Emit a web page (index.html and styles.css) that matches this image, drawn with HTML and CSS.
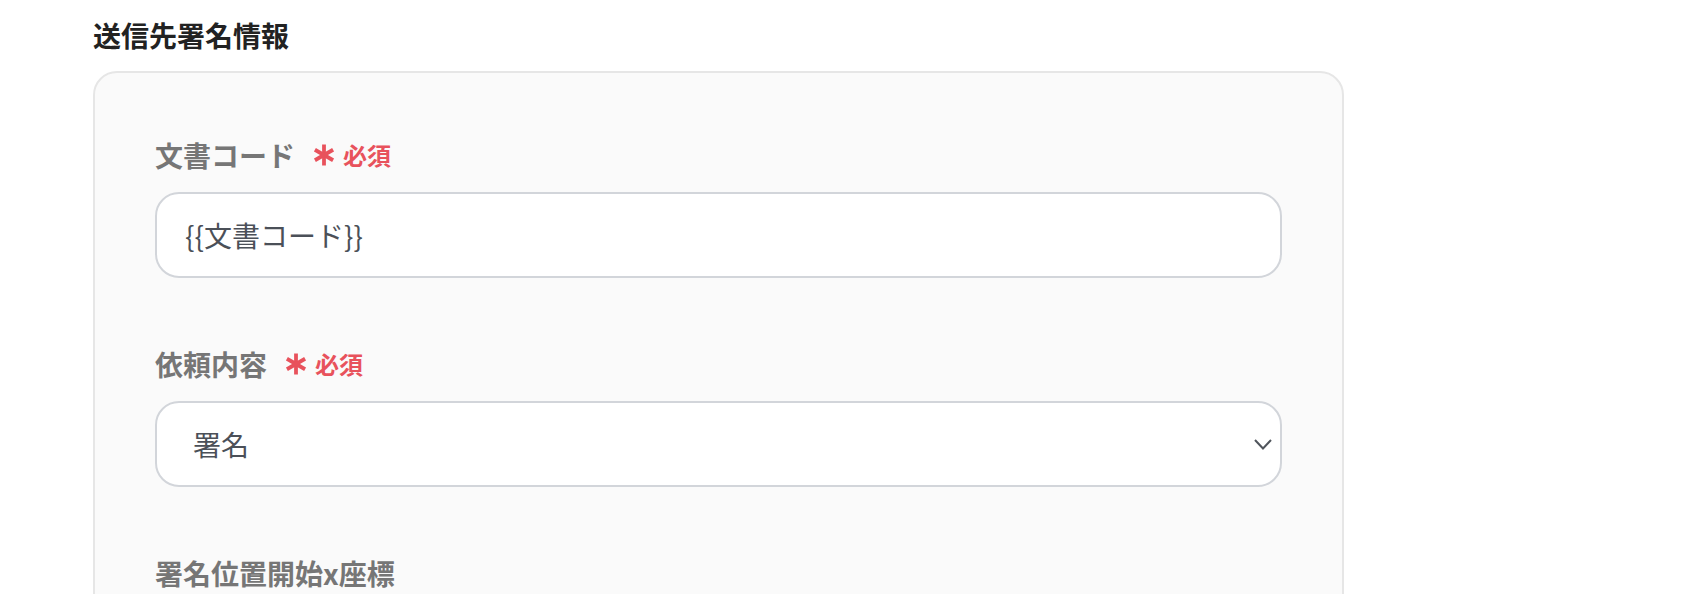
FILE: index.html
```html
<!DOCTYPE html>
<html lang="ja">
<head>
<meta charset="utf-8">
<title>送信先署名情報</title>
<link rel="stylesheet" href="styles.css">
</head>
<body>
<div class="page">
  <h2 class="title">送信先署名情報</h2>
  <div class="panel">
    <div class="field">
      <div class="label-row">
        <span class="label">文書コード</span>
        <svg class="req-mark" viewBox="0 0 22 22" width="22" height="22"><g stroke="#e8525c" stroke-width="3.8" stroke-linecap="butt"><line x1="11" y1="0.5" x2="11" y2="21.5"/><line x1="1.9" y1="5.75" x2="20.1" y2="16.25"/><line x1="1.9" y1="16.25" x2="20.1" y2="5.75"/></g></svg>
        <span class="req">必須</span>
      </div>
      <div class="input">{{文書コード}}</div>
    </div>
    <div class="field">
      <div class="label-row">
        <span class="label">依頼内容</span>
        <svg class="req-mark" viewBox="0 0 22 22" width="22" height="22"><g stroke="#e8525c" stroke-width="3.8" stroke-linecap="butt"><line x1="11" y1="0.5" x2="11" y2="21.5"/><line x1="1.9" y1="5.75" x2="20.1" y2="16.25"/><line x1="1.9" y1="16.25" x2="20.1" y2="5.75"/></g></svg>
        <span class="req">必須</span>
      </div>
      <div class="input select">
        <span>署名</span>
        <svg class="chevron" viewBox="0 0 18 11" width="18" height="11"><polyline points="1,1 9,9.5 17,1" fill="none" stroke="#50555c" stroke-width="2"/></svg>
      </div>
    </div>
    <div class="field">
      <div class="label-row">
        <span class="label">署名位置開始x座標</span>
      </div>
    </div>
  </div>
</div>
</body>
</html>
```
FILE: styles.css
```css
html, body {
  margin: 0;
  padding: 0;
  background: #ffffff;
}
body {
  font-family: "Noto Sans CJK JP", "Noto Sans", sans-serif;
  height: 594px;
  overflow: hidden;
}
.page {
  padding: 14px 0 0 93px;
}
.title {
  margin: 0 0 15px;
  font-size: 28px;
  line-height: 42px;
  font-weight: 700;
  color: #222222;
}
.panel {
  width: 1251px;
  box-sizing: border-box;
  background: #fafafa;
  border: 2px solid #e6e6e6;
  border-radius: 24px;
  padding: 61px 60px 80px;
}
.field + .field {
  margin-top: 65px;
}
.label-row {
  display: flex;
  align-items: center;
  height: 42px;
  margin-bottom: 16px;
}
.label {
  font-size: 28px;
  line-height: 42px;
  font-weight: 700;
  color: #767676;
}
.req-mark {
  margin-left: 18px;
  display: block;
}
.req {
  margin-left: 8px;
  font-size: 24px;
  line-height: 42px;
  font-weight: 700;
  color: #e8525c;
}
.input {
  height: 86px;
  box-sizing: border-box;
  background: #ffffff;
  border: 2px solid #d2d5da;
  border-radius: 24px;
  padding: 0 28px;
  display: flex;
  align-items: center;
  font-size: 28px;
  color: #4b5058;
}
.select {
  padding: 0 8px 0 36px;
  justify-content: space-between;
}
.chevron {
  display: block;
}
```
